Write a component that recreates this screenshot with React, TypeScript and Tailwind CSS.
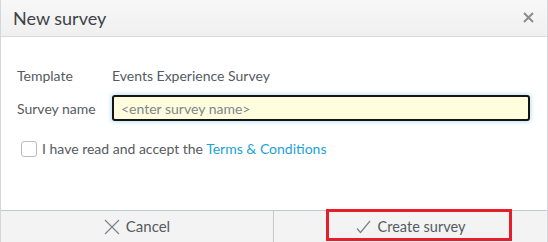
export default function App() {
  return (
    <div
      className="w-[548px] h-[242px] flex flex-col bg-white border-x border-[#d4d6da] text-[#555b61]"
      style={{ fontFamily: "Lato, 'Open Sans', sans-serif" }}
    >
      <div className="h-[37px] flex items-center justify-between pl-[12px] pr-[13px] border-b border-[#dadada] bg-gradient-to-b from-[#f7f7f7] to-[#f0f0f0]">
        <span className="text-[18px] text-[#3d4247] leading-none">New survey</span>
        <svg width="11" height="11" viewBox="0 0 11 11" className="text-[#8c8c8c] mt-[-2px]">
          <path d="M1 1 L10 10 M10 1 L1 10" stroke="currentColor" strokeWidth="2" fill="none" />
        </svg>
      </div>

      <div className="flex-1 flex flex-col pt-[28px] text-[14px]">
        <div className="flex items-center h-[20px] pl-[16px]">
          <span className="w-[95px]">Template</span>
          <span>Events Experience Survey</span>
        </div>
        <div className="flex items-center mt-[10px] pl-[16px] pr-[17px]">
          <span className="w-[95px]">Survey name</span>
          <div className="flex-1 h-[26px] flex items-center pl-[7px] rounded-[3px] border-2 border-[#141414] bg-[#fefede] shadow-[0_0_4px_1px_#b9e0f5]">
            <span className="text-[#80868c] text-[14px]">&lt;enter survey name&gt;</span>
          </div>
        </div>
        <div className="flex items-center mt-[17px] pl-[20px]">
          <span className="w-[16px] h-[16px] rounded-[3px] border border-[#b8bcc0] bg-white" />
          <span className="ml-[5px]">
            I have read and accept the <span className="text-[#1ba2d6]">Terms &amp; Conditions</span>
          </span>
        </div>
      </div>

      <div className="h-[32px] grid grid-cols-2 border-t border-[#c3c9d1] bg-[#f3f3f3] text-[15px]">
        <div className="flex items-center justify-center gap-[6px] border-r border-[#c3c9d1]">
          <svg width="16" height="16" viewBox="0 0 16 16" className="text-[#7b8288]">
            <path d="M1 1 L15 15 M15 1 L1 15" stroke="currentColor" strokeWidth="1.2" fill="none" />
          </svg>
          <span>Cancel</span>
        </div>
        <div className="relative flex items-center justify-center gap-[7px] text-[14.5px]">
          <svg width="15" height="14" viewBox="0 0 15 14" className="text-[#7b8288]">
            <path d="M1 8.5 L4.5 12.5 L14 1" stroke="currentColor" strokeWidth="1.2" fill="none" />
          </svg>
          <span>Create survey</span>
          <div className="absolute left-[52px] w-[186px] -top-[2px] bottom-[1px] border-[3px] border-[#e81d2b]" />
        </div>
      </div>
    </div>
  );
}
